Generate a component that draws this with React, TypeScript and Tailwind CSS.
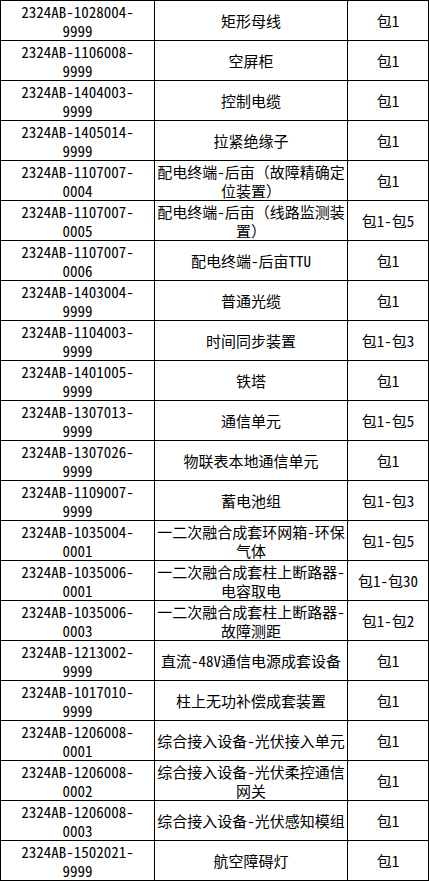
import React from "react";

const rows: [string, string, string, string][] = [
  ["2324AB-1028004-", "9999", "矩形母线", "包1"],
  ["2324AB-1106008-", "9999", "空屏柜", "包1"],
  ["2324AB-1404003-", "9999", "控制电缆", "包1"],
  ["2324AB-1405014-", "9999", "拉紧绝缘子", "包1"],
  ["2324AB-1107007-", "0004", "配电终端-后亩（故障精确定位装置）", "包1"],
  ["2324AB-1107007-", "0005", "配电终端-后亩（线路监测装置）", "包1-包5"],
  ["2324AB-1107007-", "0006", "配电终端-后亩TTU", "包1"],
  ["2324AB-1403004-", "9999", "普通光缆", "包1"],
  ["2324AB-1104003-", "9999", "时间同步装置", "包1-包3"],
  ["2324AB-1401005-", "9999", "铁塔", "包1"],
  ["2324AB-1307013-", "9999", "通信单元", "包1-包5"],
  ["2324AB-1307026-", "9999", "物联表本地通信单元", "包1"],
  ["2324AB-1109007-", "9999", "蓄电池组", "包1-包3"],
  ["2324AB-1035004-", "0001", "一二次融合成套环网箱-环保气体", "包1-包5"],
  ["2324AB-1035006-", "0001", "一二次融合成套柱上断路器-电容取电", "包1-包30"],
  ["2324AB-1035006-", "0003", "一二次融合成套柱上断路器-故障测距", "包1-包2"],
  ["2324AB-1213002-", "9999", "直流-48V通信电源成套设备", "包1"],
  ["2324AB-1017010-", "9999", "柱上无功补偿成套装置", "包1"],
  ["2324AB-1206008-", "0001", "综合接入设备-光伏接入单元", "包1"],
  ["2324AB-1206008-", "0002", "综合接入设备-光伏柔控通信网关", "包1"],
  ["2324AB-1206008-", "0003", "综合接入设备-光伏感知模组", "包1"],
  ["2324AB-1502021-", "9999", "航空障碍灯", "包1"],
];

export default function App() {
  return (
    <div
      className="w-[429px] bg-white text-black text-[15px] leading-[19px] font-light"
      style={{ fontFamily: '"Noto Sans Mono CJK SC", "Noto Sans CJK SC", monospace' }}
    >
      <table className="border-collapse w-[429px] table-fixed">
        <colgroup>
          <col className="w-[154px]" />
          <col className="w-[193px]" />
          <col className="w-[81px]" />
        </colgroup>
        <tbody>
          {rows.map((r, i) => (
            <tr key={i} className="h-[40px]">
              <td className="border border-black text-center align-middle p-0">
                <div>{r[0]}</div>
                <div>{r[1]}</div>
              </td>
              <td className="border border-black text-center align-middle p-0 break-all">
                {r[2]}
              </td>
              <td className="border border-black text-center align-middle p-0 whitespace-nowrap">
                {r[3]}
              </td>
            </tr>
          ))}
        </tbody>
      </table>
    </div>
  );
}
